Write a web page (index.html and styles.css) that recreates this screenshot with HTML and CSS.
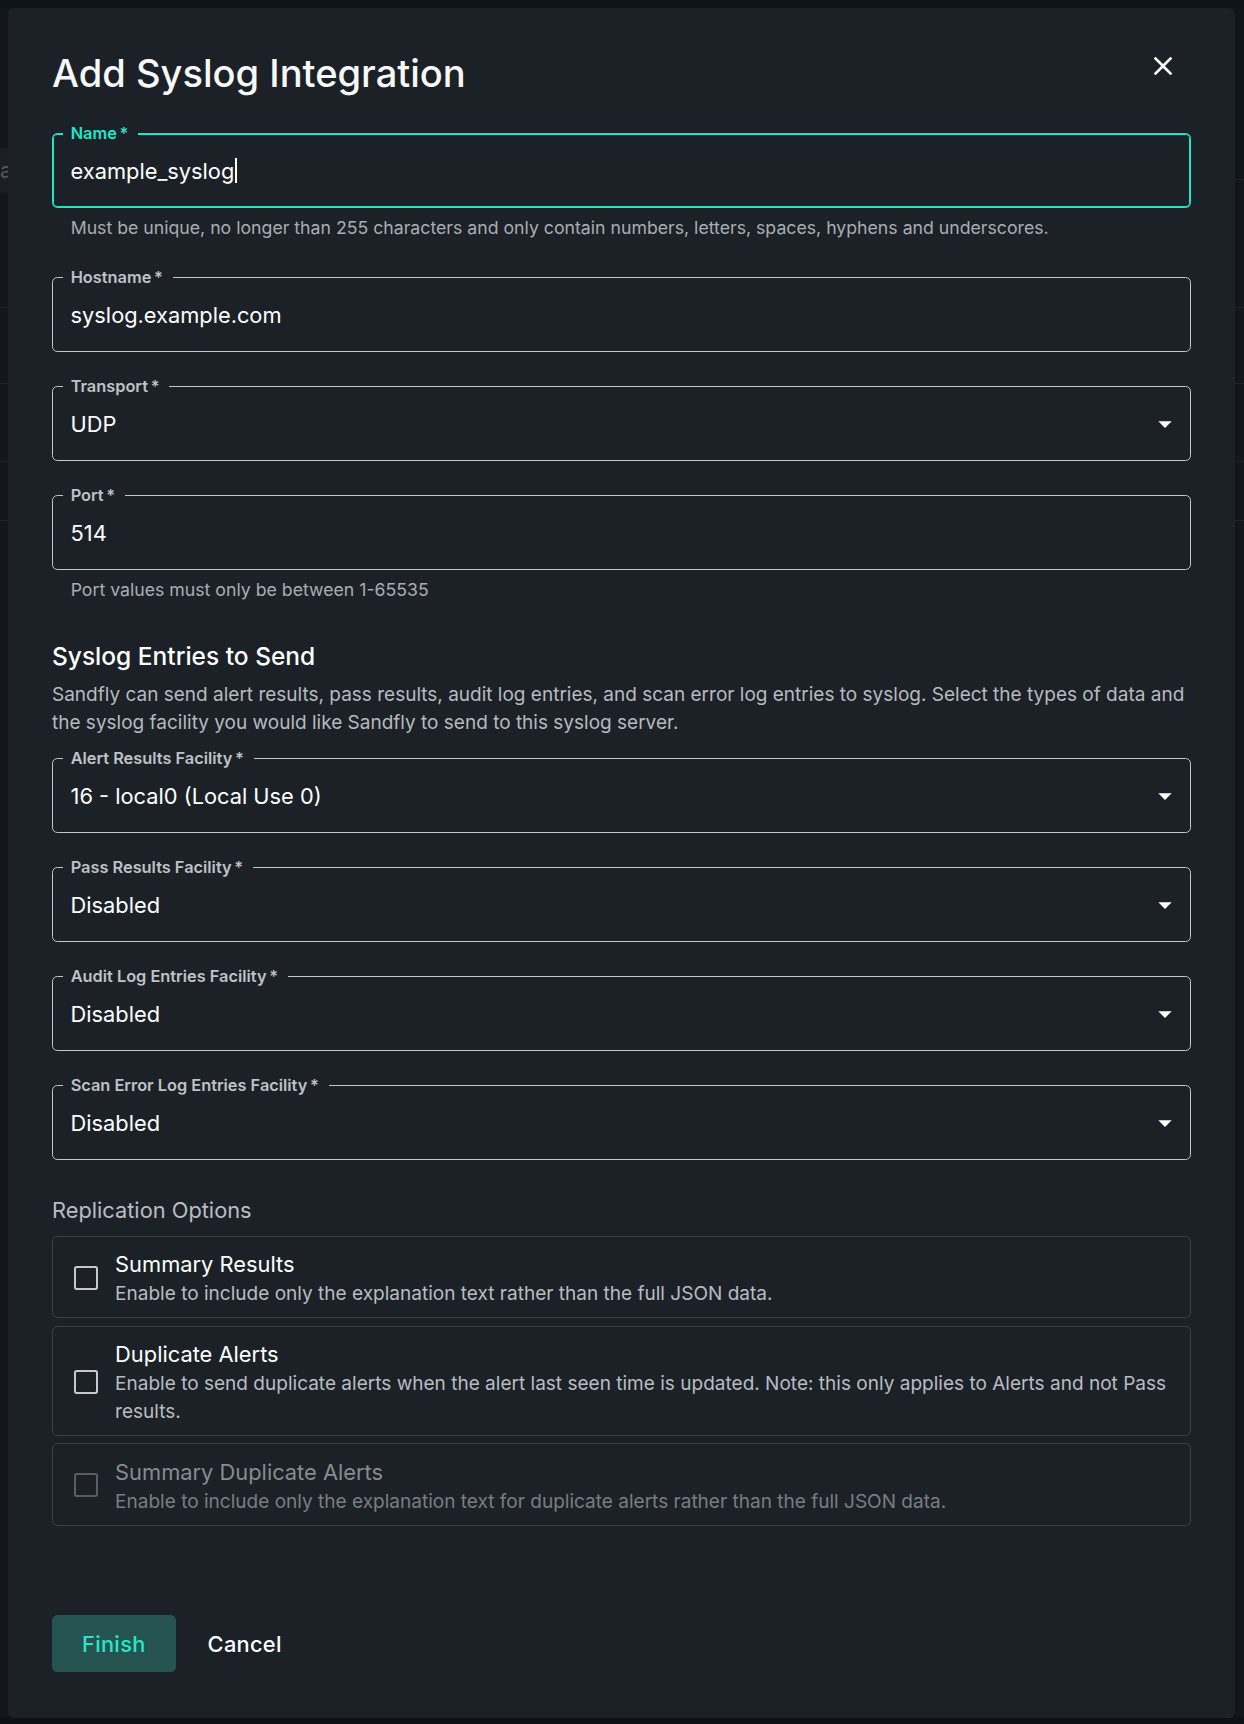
FILE: index.html
```html
<!DOCTYPE html>
<html lang="en">
<head>
<meta charset="utf-8">
<title>Add Syslog Integration</title>
<link rel="stylesheet" href="styles.css">
</head>
<body>
<div class="page-behind">
  <div class="behind-search">al</div>
</div>

<div class="dialog" role="dialog" aria-labelledby="dlg-title">
  <div class="dialog-head">
    <h2 id="dlg-title" class="dialog-title">Add Syslog Integration</h2>
    <button class="close-btn" type="button" aria-label="Close">
      <svg viewBox="0 0 24 24" width="32" height="32"><path fill="currentColor" d="M19 6.41 17.59 5 12 10.59 6.41 5 5 6.41 10.59 12 5 17.59 6.41 19 12 13.41 17.59 19 19 17.59 13.41 12z"/></svg>
    </button>
  </div>

  <form class="form">
    <div class="field-block first">
      <div class="field focused">
        <label class="field-label">Name&thinsp;*</label>
        <span class="field-value">example_syslog<span class="caret"></span></span>
      </div>
      <p class="helper">Must be unique, no longer than 255 characters and only contain numbers, letters, spaces, hyphens and underscores.</p>
    </div>

    <div class="field-block">
      <div class="field">
        <label class="field-label">Hostname&thinsp;*</label>
        <span class="field-value">syslog.example.com</span>
      </div>
    </div>

    <div class="field-block">
      <div class="field select">
        <label class="field-label">Transport&thinsp;*</label>
        <span class="field-value">UDP</span>
        <svg class="drop" viewBox="0 0 24 24" width="32" height="32"><path fill="currentColor" d="M7 10l5 5 5-5z"/></svg>
      </div>
    </div>

    <div class="field-block">
      <div class="field">
        <label class="field-label">Port&thinsp;*</label>
        <span class="field-value">514</span>
      </div>
      <p class="helper">Port values must only be between 1-65535</p>
    </div>

    <h3 class="section-title">Syslog Entries to Send</h3>
    <p class="section-text">Sandfly can send alert results, pass results, audit log entries, and scan error log entries to syslog. Select the types of data and the syslog facility you would like Sandfly to send to this syslog server.</p>

    <div class="field-block tight">
      <div class="field select">
        <label class="field-label">Alert Results Facility&thinsp;*</label>
        <span class="field-value">16 - local0 (Local Use 0)</span>
        <svg class="drop" viewBox="0 0 24 24" width="32" height="32"><path fill="currentColor" d="M7 10l5 5 5-5z"/></svg>
      </div>
    </div>

    <div class="field-block">
      <div class="field select">
        <label class="field-label">Pass Results Facility&thinsp;*</label>
        <span class="field-value">Disabled</span>
        <svg class="drop" viewBox="0 0 24 24" width="32" height="32"><path fill="currentColor" d="M7 10l5 5 5-5z"/></svg>
      </div>
    </div>

    <div class="field-block">
      <div class="field select">
        <label class="field-label">Audit Log Entries Facility&thinsp;*</label>
        <span class="field-value">Disabled</span>
        <svg class="drop" viewBox="0 0 24 24" width="32" height="32"><path fill="currentColor" d="M7 10l5 5 5-5z"/></svg>
      </div>
    </div>

    <div class="field-block">
      <div class="field select">
        <label class="field-label">Scan Error Log Entries Facility&thinsp;*</label>
        <span class="field-value">Disabled</span>
        <svg class="drop" viewBox="0 0 24 24" width="32" height="32"><path fill="currentColor" d="M7 10l5 5 5-5z"/></svg>
      </div>
    </div>

    <h4 class="group-title">Replication Options</h4>

    <div class="options">
      <label class="option">
        <span class="checkbox"></span>
        <span class="option-text">
          <span class="option-title">Summary Results</span>
          <span class="option-desc">Enable to include only the explanation text rather than the full JSON data.</span>
        </span>
      </label>
      <label class="option">
        <span class="checkbox"></span>
        <span class="option-text">
          <span class="option-title">Duplicate Alerts</span>
          <span class="option-desc">Enable to send duplicate alerts when the alert last seen time is updated. Note: this only applies to Alerts and not Pass results.</span>
        </span>
      </label>
      <label class="option disabled">
        <span class="checkbox"></span>
        <span class="option-text">
          <span class="option-title">Summary Duplicate Alerts</span>
          <span class="option-desc">Enable to include only the explanation text for duplicate alerts rather than the full JSON data.</span>
        </span>
      </label>
    </div>

    <div class="actions">
      <button class="btn btn-primary" type="button">Finish</button>
      <button class="btn btn-text" type="button">Cancel</button>
    </div>
  </form>
</div>
</body>
</html>
```

FILE: styles.css
```css
* {
  box-sizing: border-box;
}

html, body {
  margin: 0;
  padding: 0;
}

body {
  min-height: 1724px;
  font-family: Inter, "Noto Sans", "Liberation Sans", sans-serif;
  color: #ffffff;
  background-color: #13171a;
  background-image:
    linear-gradient(#0e1318, #0e1318),
    linear-gradient(#1f2327, #1f2327),
    linear-gradient(#1f2327, #1f2327),
    linear-gradient(#1f2327, #1f2327),
    linear-gradient(#1f2327, #1f2327),
    linear-gradient(#1f2327, #1f2327),
    linear-gradient(#101518, #101518),
    linear-gradient(#0e1216, #0e1216);
  background-repeat: no-repeat;
  background-size:
    100% 8px,
    100% 1px,
    100% 1px,
    100% 1px,
    100% 1px,
    10px 1px,
    10px 171px,
    100% 8px;
  background-position:
    0 0,
    0 307px,
    0 383px,
    0 461px,
    0 520px,
    100% 179px,
    100% 8px,
    0 1717px;
}

/* dimmed application page underneath the modal */
.page-behind {
  position: fixed;
  inset: 0;
  pointer-events: none;
}

.behind-search {
  position: absolute;
  left: 0;
  top: 148px;
  width: 20px;
  height: 45px;
  background: #1b1f23;
  color: #54585c;
  font-size: 22px;
  line-height: 45px;
}

/* modal */
.dialog {
  position: relative;
  margin: 8px 0 0 8px;
  width: 1227px;
  height: 1710px;
  padding: 42px 44px 45px;
  background: #1c2128;
  border-radius: 6px;
}

.dialog-head {
  display: flex;
  align-items: flex-start;
  justify-content: space-between;
}

.dialog-title {
  margin: 0;
  font-size: 38.1px;
  line-height: 46px;
  font-weight: 500;
  color: #f7f8f9;
  letter-spacing: 0;
}

.close-btn {
  display: flex;
  padding: 10.67px;
  margin: -10.33px 1px 0 0;
  border: 0;
  background: transparent;
  color: #ffffff;
  cursor: pointer;
}

.form {
  display: flex;
  flex-direction: column;
}

/* outlined text fields */
.field-block {
  margin-top: 34px;
}

.field-block.first {
  margin-top: 37px;
}

.field-block.tight {
  margin-top: 22px;
}

.field {
  position: relative;
  display: flex;
  align-items: center;
  height: 75px;
  padding: 0 17.6px;
  border: 1px solid #c3c6ca;
  border-radius: 5.33px;
}

.field.focused {
  border-color: #1fe6c9;
  box-shadow: inset 0 0 0 1px #1fe6c9;
}

.field.select {
  padding-right: 9.3px;
}

.field-label {
  position: absolute;
  top: -12px;
  left: 9.67px;
  padding: 0 10px 0 8px;
  background: #1c2128;
  color: #bfc2c6;
  font-size: 16.35px;
  line-height: 23px;
  font-weight: 600;
  white-space: nowrap;
}

.field.focused .field-label {
  color: #1fe6c9;
}

.field-value {
  flex: 1;
  display: flex;
  align-items: center;
  font-size: 21.8px;
  line-height: 30px;
  color: #ffffff;
  white-space: nowrap;
}

.caret {
  display: inline-block;
  width: 1.5px;
  height: 25px;
  margin-left: 1px;
  background: #ffffff;
}

.drop {
  flex: none;
  color: #ffffff;
}

.helper {
  margin: 4px 0 0;
  padding-left: 18.67px;
  font-size: 17.7px;
  line-height: 31px;
  color: #a9adb2;
}

/* section headings */
.section-title {
  margin: 35px 0 0;
  font-size: 24.5px;
  line-height: 32px;
  font-weight: 500;
  color: #ffffff;
}

.section-text {
  margin: 9px 0 0;
  font-size: 19px;
  line-height: 27.6px;
  color: #b6babf;
}

.group-title {
  margin: 33.5px 0 0;
  font-size: 21.8px;
  line-height: 32px;
  font-weight: 400;
  color: #b9bdc2;
}

/* checkbox option cards */
.options {
  display: flex;
  flex-direction: column;
  gap: 7.2px;
  margin-top: 10px;
}

.option {
  display: flex;
  align-items: center;
  gap: 17.4px;
  padding: 11.8px 20px 9.4px 20.7px;
  border: 1px solid #3c4148;
  border-radius: 5.33px;
  cursor: pointer;
}

.checkbox {
  flex: none;
  width: 24px;
  height: 24px;
  margin-top: -1px;
  border: 2.67px solid #c6c9cd;
  border-radius: 2.67px;
}

.option-text {
  display: flex;
  flex-direction: column;
}

.option-title {
  font-size: 21.85px;
  line-height: 32px;
  color: #ffffff;
}

.option-desc {
  font-size: 19.05px;
  line-height: 27.6px;
  color: #b8bcc1;
}

.option.disabled {
  cursor: default;
}

.option.disabled .checkbox {
  border-color: #5a5e64;
}

.option.disabled .option-title {
  color: #878b90;
}

.option.disabled .option-desc {
  color: #797d82;
}

/* footer buttons */
.actions {
  display: flex;
  align-items: center;
  gap: 2px;
  margin-top: 89px;
}

.btn {
  height: 57px;
  padding: 0 30px;
  border: 0;
  border-radius: 5.33px;
  font-family: Inter, "Noto Sans", "Liberation Sans", sans-serif;
  font-size: 21.8px;
  font-weight: 500;
  letter-spacing: 0.3px;
  cursor: pointer;
}

.btn-primary {
  background: #25534f;
  color: #27e7c9;
}

.btn-text {
  background: transparent;
  color: #ffffff;
}
```
